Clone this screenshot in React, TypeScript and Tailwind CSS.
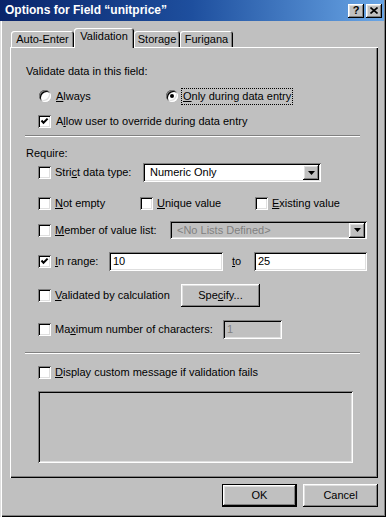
import type { ReactNode } from "react";

const raised =
  "shadow-[inset_-1px_-1px_0_#000,inset_1px_1px_0_#fff,inset_-2px_-2px_0_#808080,inset_2px_2px_0_#dfdfdf]";
const sunken =
  "shadow-[inset_1px_1px_0_#808080,inset_-1px_-1px_0_#fff,inset_2px_2px_0_#000,inset_-2px_-2px_0_#dfdfdf]";

function Check({ checked = false }: { checked?: boolean }) {
  return (
    <span className={`relative inline-block h-[13px] w-[13px] shrink-0 bg-white ${sunken}`}>
      {checked && (
        <svg className="absolute inset-0" width="13" height="13" viewBox="0 0 13 13">
          <path d="M3.5 5.5 L5.5 7.8 L9.6 3.6" stroke="#000" strokeWidth="2" fill="none" />
        </svg>
      )}
    </span>
  );
}

function Radio({ checked = false }: { checked?: boolean }) {
  return (
    <span
      className={`flex h-[12px] w-[12px] shrink-0 items-center justify-center rounded-full bg-white shadow-[inset_1px_1px_0_#808080,inset_-1px_-1px_0_#fff,inset_2px_2px_0_#000,inset_-2px_-2px_0_#dfdfdf]`}
    >
      {checked && <span className="h-[4px] w-[4px] rounded-full bg-black" />}
    </span>
  );
}

function DropBtn() {
  return (
    <span className={`ml-auto flex h-[15px] w-[16px] shrink-0 items-center justify-center bg-[#c0c0c0] ${raised}`}>
      <svg width="7" height="4" viewBox="0 0 7 4">
        <path d="M0 0 H7 L3.5 4 Z" fill="#000" />
      </svg>
    </span>
  );
}

function Sep({ mt }: { mt: string }) {
  return <div className={`${mt} ml-[15px] h-[2px] w-[335px] border-t border-b border-t-[#808080] border-b-white`} />;
}

function Tab({ children, w, active = false }: { children: ReactNode; w: string; active?: boolean }) {
  return (
    <div
      className={`${w} flex items-center justify-center rounded-t-[3px] shadow-[inset_1px_1px_0_#fff,inset_-1px_0_0_#000,inset_-2px_0_0_#808080] ${
        active ? "relative z-10 h-[20px] bg-[#c0c0c0] pb-[3px]" : "mb-[1px] h-[16px]"
      }`}
    >
      {children}
    </div>
  );
}

export default function App() {
  return (
    <div className="h-[517px] w-[386px] overflow-hidden bg-[#c0c0c0] font-['Liberation_Sans',Arial,sans-serif] text-[11px] leading-[13px] text-black">
      <div className="flex h-[517px] flex-col shadow-[inset_1px_0_0_#dfdfdf,inset_2px_0_0_#fff,inset_-1px_-1px_0_#000,inset_-2px_-2px_0_#808080]">
        {/* title bar */}
        <div className="mr-[2px] flex h-[21px] shrink-0 items-center bg-gradient-to-r from-[#0a246a] via-[#1e4f9e] to-[#6aa6e6] pl-[5px] pr-[2px]">
          <span className="text-[12px] font-bold text-white">Options for Field “unitprice”</span>
          <div className="ml-auto flex gap-[2px]">
            <span className={`flex h-[14px] w-[16px] items-center justify-center bg-[#c0c0c0] text-[11px] font-bold ${raised}`}>
              ?
            </span>
            <span className={`flex h-[14px] w-[16px] items-center justify-center bg-[#c0c0c0] ${raised}`}>
              <svg width="8" height="7" viewBox="0 0 8 7">
                <path d="M0.5 0.5 L7.5 6.5 M7.5 0.5 L0.5 6.5" stroke="#000" strokeWidth="1.6" />
              </svg>
            </span>
          </div>
        </div>

        {/* tabs */}
        <div className="mt-[7px] flex h-[20px] shrink-0 items-end pl-[11px]">
          <Tab w="w-[63px]">Auto-Enter</Tab>
          <Tab w="w-[60px]" active>
            Validation
          </Tab>
          <Tab w="w-[46px]">Storage</Tab>
          <Tab w="w-[53px]">Furigana</Tab>
        </div>

        {/* panel */}
        <div className="-mt-px ml-[10px] flex h-[431px] w-[368px] shrink-0 flex-col shadow-[inset_1px_1px_0_#fff,inset_-1px_-1px_0_#000,inset_-2px_-2px_0_#808080]">
          <div className="ml-[16px] mt-[17px] flex h-[14px] items-center">Validate data in this field:</div>

          <div className="ml-[29px] mt-[10px] flex h-[16px] items-center">
            <div className="flex w-[127px] items-center">
              <Radio />
              <span className="ml-[5px]">
                <u>A</u>lways
              </span>
            </div>
            <Radio checked />
            <span className="ml-[3px] border border-dotted border-black px-[1px] py-[1px]">
              <u>O</u>nly during data entry
            </span>
          </div>

          <div className="ml-[28px] mt-[10px] flex h-[14px] items-center">
            <Check checked />
            <span className="ml-[5px]">
              A<u>l</u>low user to override during data entry
            </span>
          </div>

          <Sep mt="mt-[7px]" />

          <div className="ml-[16px] mt-[9px] flex h-[14px] items-center">Require:</div>

          <div className="ml-[28px] mt-[3px] flex h-[19px] items-center">
            <Check />
            <span className="ml-[4px] w-[88px]">
              Stri<u>c</u>t data type:
            </span>
            <div className={`flex h-[19px] w-[178px] items-center bg-white pl-[7px] pr-[2px] ${sunken}`}>
              <span>Numeric Only</span>
              <DropBtn />
            </div>
          </div>

          <div className="ml-[28px] mt-[14px] flex h-[14px] items-center">
            <div className="flex w-[102px] items-center">
              <Check />
              <span className="ml-[4px]">
                <u>N</u>ot empty
              </span>
            </div>
            <div className="flex w-[115px] items-center">
              <Check />
              <span className="ml-[4px]">
                <u>U</u>nique value
              </span>
            </div>
            <div className="flex items-center">
              <Check />
              <span className="ml-[4px]">
                <u>E</u>xisting value
              </span>
            </div>
          </div>

          <div className="ml-[28px] mt-[11px] flex h-[18px] items-center">
            <Check />
            <span className="ml-[4px] w-[115px]">
              <u>M</u>ember of value list:
            </span>
            <div className={`flex h-[18px] w-[197px] items-center bg-[#c0c0c0] pl-[7px] pr-[2px] ${sunken}`}>
              <span className="text-[#808080]">&lt;No Lists Defined&gt;</span>
              <DropBtn />
            </div>
          </div>

          <div className="ml-[28px] mt-[13px] flex h-[19px] items-center">
            <Check checked />
            <span className="ml-[4px] w-[54px]">
              <u>I</u>n range:
            </span>
            <div className={`flex h-[19px] w-[114px] items-center bg-white pl-[4px] ${sunken}`}>10</div>
            <span className="ml-[9px] w-[22px]">
              <u>t</u>o
            </span>
            <div className={`flex h-[19px] w-[113px] items-center bg-white pl-[4px] ${sunken}`}>25</div>
          </div>

          <div className="ml-[28px] mt-[13px] flex h-[23px] items-center">
            <Check />
            <span className="ml-[4px] w-[126px]">
              <u>V</u>alidated by calculation
            </span>
            <div className={`flex h-[23px] w-[79px] items-center justify-center ${raised}`}>
              <span>
                Spe<u>c</u>ify...
              </span>
            </div>
          </div>

          <div className="ml-[28px] mt-[13px] flex h-[19px] items-center">
            <Check />
            <span className="ml-[4px] w-[168px]">
              Ma<u>x</u>imum number of characters:
            </span>
            <div className={`flex h-[19px] w-[59px] items-center bg-[#c0c0c0] pl-[4px] text-[#808080] ${sunken}`}>1</div>
          </div>

          <Sep mt="mt-[13px]" />

          <div className="ml-[28px] mt-[11px] flex h-[14px] items-center">
            <Check />
            <span className="ml-[4px]">
              <u>D</u>isplay custom message if validation fails
            </span>
          </div>

          <div className={`ml-[28px] mt-[12px] h-[72px] w-[315px] bg-[#c0c0c0] ${sunken}`} />
        </div>

        {/* buttons */}
        <div className="ml-[10px] mt-[6px] flex w-[368px] justify-end gap-[6px]">
          <div className="h-[23px] w-[75px] border border-black">
            <div className={`flex h-full w-full items-center justify-center ${raised}`}>OK</div>
          </div>
          <div className={`flex h-[23px] w-[75px] items-center justify-center ${raised}`}>Cancel</div>
        </div>
      </div>
    </div>
  );
}
